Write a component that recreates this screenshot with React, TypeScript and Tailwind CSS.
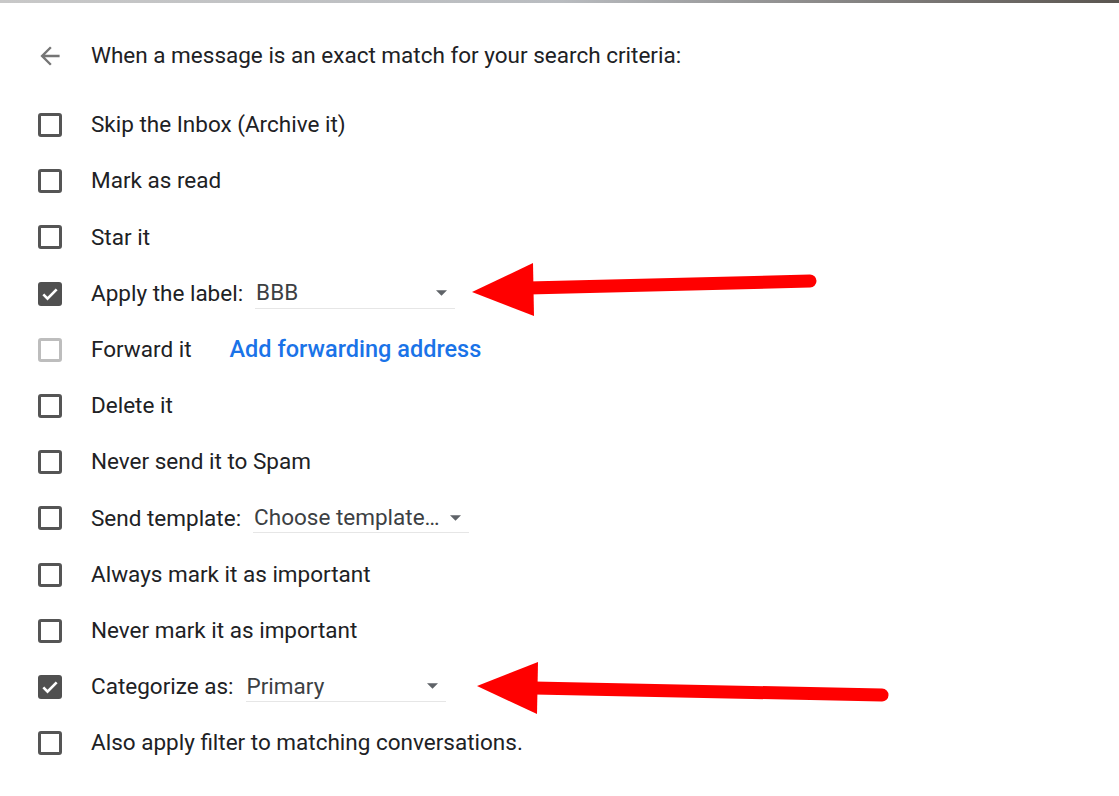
import React from "react";

type Row = {
  label: string;
  checked?: boolean;
  disabled?: boolean;
  select?: { value: string; width: string };
  link?: string;
};

const rows: Row[] = [
  { label: "Skip the Inbox (Archive it)" },
  { label: "Mark as read" },
  { label: "Star it" },
  { label: "Apply the label:", checked: true, select: { value: "BBB", width: "w-[200px]" } },
  { label: "Forward it", disabled: true, link: "Add forwarding address" },
  { label: "Delete it" },
  { label: "Never send it to Spam" },
  { label: "Send template:", select: { value: "Choose template…", width: "w-[216px]" } },
  { label: "Always mark it as important" },
  { label: "Never mark it as important" },
  { label: "Categorize as:", checked: true, select: { value: "Primary", width: "w-[200px]" } },
  { label: "Also apply filter to matching conversations." },
];

const Checkbox = ({ checked, disabled }: { checked?: boolean; disabled?: boolean }) => {
  if (checked) {
    return (
      <div className="w-[24px] h-[24px] rounded-[3px] bg-[#505050] flex items-center justify-center shrink-0">
        <svg width="20" height="20" viewBox="0 0 24 24">
          <path d="M4 12.5l5 5 11-11" fill="none" stroke="#fff" strokeWidth="3.2" />
        </svg>
      </div>
    );
  }
  return (
    <div
      className={`w-[24px] h-[24px] rounded-[3px] border-[3px] shrink-0 ${
        disabled ? "border-[#bdbdbd]" : "border-[#555]"
      }`}
    />
  );
};

const Select = ({ value, width }: { value: string; width: string }) => (
  <div className={`${width} ml-[12px] h-[30px] flex items-center justify-between border-b border-[#e6e6e6] pl-[1px] pr-[8px] text-[#3c4043]`}>
    <span>{value}</span>
    <svg width="11" height="6" viewBox="0 0 12 6">
      <path d="M0 0h12L6 6z" fill="#5f6368" />
    </svg>
  </div>
);

export default function App() {
  return (
    <div className="relative w-[1119px] h-[796px] bg-white overflow-hidden font-['Roboto',sans-serif] text-[22.5px] text-[#202124]">
      <div className="h-[3px] bg-gradient-to-r from-[#c8c8c8] via-[#b9bcc0] to-[#5a5550]" />
      <div className="pl-[38px] pt-[25px]">
        <div className="h-[56px] flex items-center">
          <svg width="24" height="24" viewBox="2 2 20 20" className="shrink-0">
            <path d="M20 11H7.83l5.59-5.59L12 4l-8 8 8 8 1.41-1.41L7.83 13H20v-2z" fill="#757575" />
          </svg>
          <span className="ml-[29px]">When a message is an exact match for your search criteria:</span>
        </div>
        <div className="mt-[13px] flex flex-col">
          {rows.map((r) => (
            <div key={r.label} className="h-[56.2px] flex items-center">
              <Checkbox checked={r.checked} disabled={r.disabled} />
              <span className="ml-[29px]">{r.label}</span>
              {r.select && <Select value={r.select.value} width={r.select.width} />}
              {r.link && <a className="ml-[38px] text-[23.5px] font-medium text-[#1a73e8]">{r.link}</a>}
            </div>
          ))}
        </div>
      </div>
      <svg className="absolute inset-0 pointer-events-none" width="1119" height="796">
        <line x1="528" y1="288" x2="810" y2="281" stroke="#ff0000" strokeWidth="13" strokeLinecap="round" />
        <polygon points="472,292 533,263 534,316" fill="#ff0000" />
        <line x1="534" y1="688" x2="882" y2="695" stroke="#ff0000" strokeWidth="13" strokeLinecap="round" />
        <polygon points="477,686 538,662 537,714" fill="#ff0000" />
      </svg>
    </div>
  );
}
